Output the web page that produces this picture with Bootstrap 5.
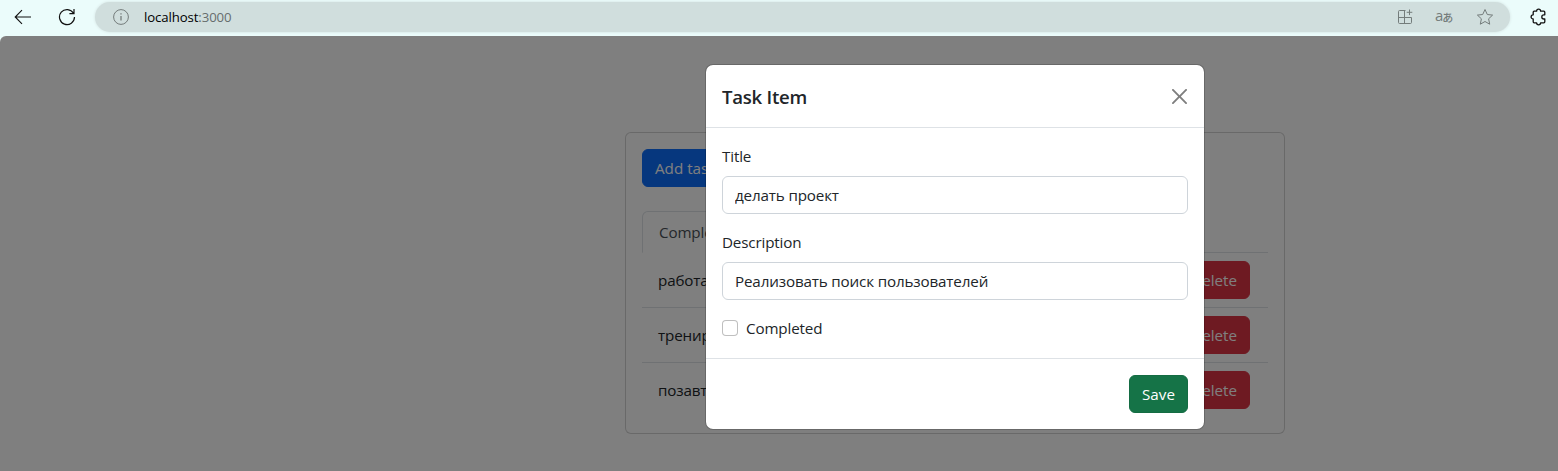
<!DOCTYPE html>
<html lang="en">
<head>
<meta charset="utf-8">
<meta name="viewport" content="width=device-width, initial-scale=1">
<title>Tasks</title>
<link href="https://cdn.jsdelivr.net/npm/bootstrap@5.3.0/dist/css/bootstrap.min.css" rel="stylesheet">
<style>
  body { font-family: "Open Sans", "Noto Sans", sans-serif; background: #ebfcfb; height: 471px; overflow: hidden; }
  .ui-text { font-size: 15.2px; letter-spacing: -.15px; }
  .toolbar { height: 36px; }
  .nav-icons { height: 34px; margin-left: 14px; gap: 26px; }
  .address { height: 30px; margin: 2px 0 0 19px; width: 1415px; padding: 0 16px 0 18px; background: #d0dedd; box-shadow: 0 0 3px #d0dedd; font-size: 13.2px; color: #666d6d; }
  .address svg { color: #747c7b; }
  .url { letter-spacing: -.1px; margin-left: 15px; padding-top: 1px; }
  .address-icons { gap: 22px; }
  .translate-icon { width: 19px; color: #747c7b; line-height: 1; }
  .glyph-a { font-size: 15px; font-family: "Open Sans", sans-serif; margin-top: -3px; }
  .glyph-ja { font-size: 11px; font-family: "Noto Sans CJK JP", sans-serif; font-weight: 500; margin-left: -1px; }
  .puzzle { margin: 8px 0 0 20px; }
  .page { height: 435px; padding-left: 352px; background: #fff; border-top-left-radius: 6px; overflow: hidden; }
  .task-column { width: 660px; }
  .task-card { margin-top: 96px; }
  .nav-tabs .nav-link.active { color: #495057; line-height: 24px; }
  .task-row { height: 55px; padding: 0 18px 0 16px; border-bottom: 1px solid #dee2e6; }
  .task-row:last-child { border-bottom: 0; height: 54px; }
  .shade { inset: 0; background: rgba(0,0,0,.5); }
  .task-modal { left: 352px; width: auto; right: 0; }
  .modal-title { font-size: 18.6px; line-height: 28px; padding-top: 2px; font-weight: 600; letter-spacing: -.25px; }
  .modal .btn-close { position: relative; top: .5px; right: .5px; }
  .form-control, .btn { height: 38px; font-size: 15.2px; }
  .form-control { border-color: #ced4da; }
  .form-check { font-size: 16px; }
  .form-check-input { border-color: rgba(0,0,0,.25); }
  .modal-body label { line-height: 24px; }
  .save-btn { width: 59px; padding-inline: 0; background: #157347; border-color: #146c43; font-weight: 500; }
</style>
</head>
<body>
<header class="toolbar d-flex align-items-start">
  <div class="nav-icons d-flex align-items-center">
    <svg width="18" height="16" viewBox="0 0 18 16" fill="none" stroke="#111" stroke-width="1.1"><path d="M17 8H1.5M8 1.2 1.2 8 8 14.8"/></svg>
    <svg width="18" height="18" viewBox="0 0 18 18" fill="none" stroke="#111" stroke-width="1.2"><path d="M15.5 5.3A7.5 7.5 0 1 0 16.5 9M16 1v4.6h-4.6"/></svg>
  </div>
  <div class="address rounded-pill d-flex align-items-center">
    <svg width="16" height="16" viewBox="0 0 16 16" fill="none" stroke="currentColor"><circle cx="8" cy="8" r="7.4"/><path d="M8 7v4.6M8 4.2v1.4" stroke-width="1.3"/></svg>
    <span class="url"><span class="text-black">localhost</span>:3000</span>
    <div class="address-icons d-flex align-items-center ms-auto">
      <svg width="16" height="16" viewBox="0 0 16 16" fill="none" stroke="currentColor"><path d="M8.5 1.5H2.6Q1.5 1.5 1.5 2.6v10.8q0 1.1 1.1 1.1h10.8q1.1 0 1.1-1.1V8.5h-13M7.5 1.5v13M12.5 .5v5.6M9.7 3.3h5.6"/></svg>
      <span class="translate-icon d-flex align-items-center"><span class="glyph-a">a</span><span class="glyph-ja">あ</span></span>
      <svg width="18" height="18" viewBox="0 0 18 18" fill="none" stroke="currentColor" stroke-linejoin="round"><path d="m9 1.5 2.3 5 5.3.6-4 3.7 1.1 5.4L9 13.5l-4.7 2.7 1.1-5.4-4-3.7 5.3-.6z"/></svg>
    </div>
  </div>
  <svg class="puzzle" width="17" height="18" viewBox="0 0 17 18" fill="none" stroke="#111" stroke-width="1.3" stroke-linejoin="round"><path d="M4.2 3.2h2.4a2 2 0 0 1 4 0h3.2q1 0 1 1v2.6h-.9a2.1 2.1 0 0 0 0 4.2h.9v2.8q0 1-1 1h-3.2a2 2 0 0 1-4 0H4.2q-1 0-1-1V11a2.1 2.1 0 0 1 0-4.2V4.2q0-1 1-1z"/></svg>
</header>

<main class="page position-relative ui-text">
  <div class="task-column mx-auto">
    <div class="card task-card p-3">
      <div class="mb-4"><button class="btn btn-primary" type="button">Add task</button></div>
      <ul class="nav nav-tabs">
        <li class="nav-item"><a class="nav-link active" href="#">Complete</a></li>
      </ul>
      <div>
        <div class="task-row d-flex align-items-center justify-content-between"><span>работать</span><button class="btn btn-danger" type="button">Delete</button></div>
        <div class="task-row d-flex align-items-center justify-content-between"><span>тренировка</span><button class="btn btn-danger" type="button">Delete</button></div>
        <div class="task-row d-flex align-items-center justify-content-between"><span>позавтракать</span><button class="btn btn-danger" type="button">Delete</button></div>
      </div>
    </div>
  </div>
  <div class="shade position-absolute"></div>
  <div class="modal task-modal d-block position-absolute" tabindex="-1">
    <div class="modal-dialog">
      <div class="modal-content">
        <div class="modal-header">
          <h5 class="modal-title">Task Item</h5>
          <button type="button" class="btn-close" aria-label="Close"></button>
        </div>
        <div class="modal-body">
          <div class="mb-3">
            <label class="d-block mb-2" for="title">Title</label>
            <input id="title" class="form-control ui-text" value="делать проект">
          </div>
          <div class="mb-3">
            <label class="d-block mb-2" for="desc">Description</label>
            <input id="desc" class="form-control ui-text" value="Реализовать поиск пользователей">
          </div>
          <div class="form-check">
            <input class="form-check-input" type="checkbox" id="done">
            <label class="form-check-label ui-text" for="done">Completed</label>
          </div>
        </div>
        <div class="modal-footer">
          <button type="button" class="btn btn-success save-btn">Save</button>
        </div>
      </div>
    </div>
  </div>
</main>
<script src="https://cdn.jsdelivr.net/npm/bootstrap@5.3.0/dist/js/bootstrap.bundle.min.js"></script>
</body>
</html>
